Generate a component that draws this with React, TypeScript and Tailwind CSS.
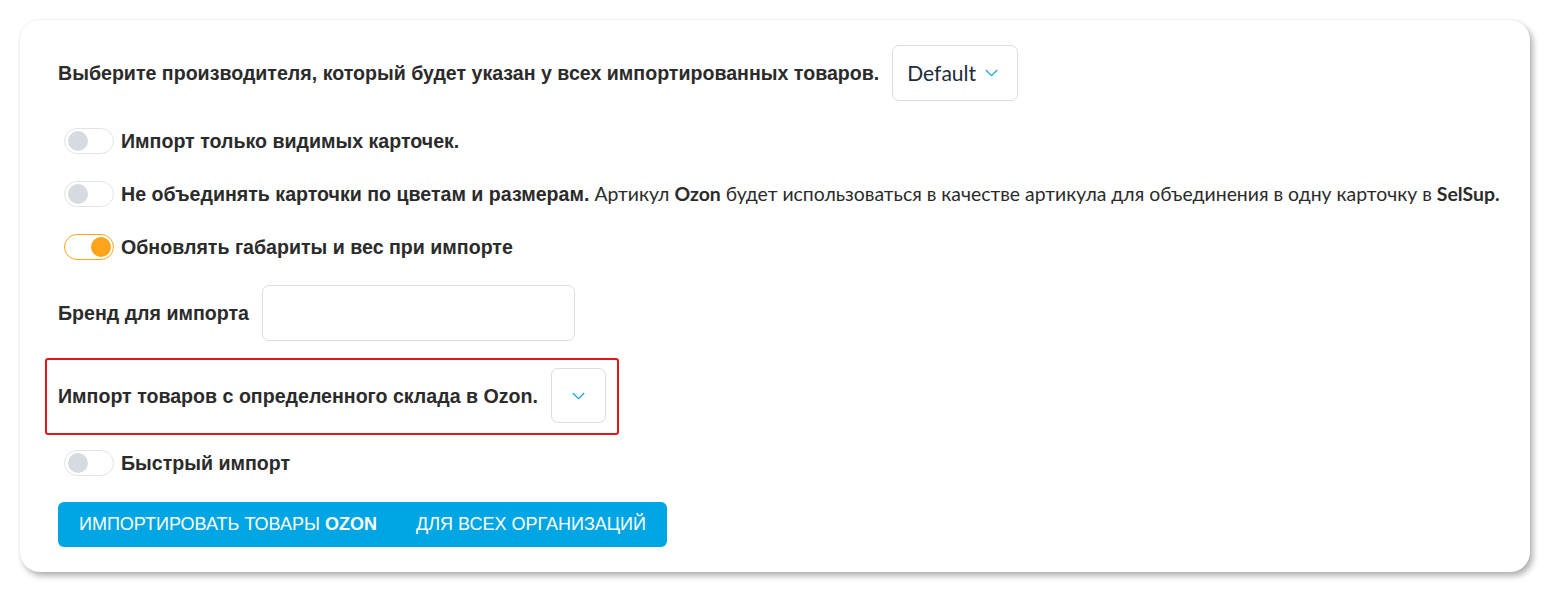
import { useState } from "react";

function Chevron() {
  return (
    <svg width="13" height="8" viewBox="0 0 13 8" fill="none">
      <path d="M0.8 1l5.7 5.7L12.2 1" stroke="#1aa6e0" strokeWidth="1.3" />
    </svg>
  );
}

function Toggle({ on, onChange }: { on: boolean; onChange: () => void }) {
  return (
    <button
      onClick={onChange}
      className={`relative w-[50px] h-[26px] shrink-0 rounded-full border bg-white ${
        on ? "border-[#ffa31a]" : "border-[#dfe3e7]"
      }`}
    >
      <span
        className={`absolute top-[2px] w-[20px] h-[20px] rounded-full ${
          on ? "left-[26px] bg-[#ffa31a]" : "left-[3px] bg-[#d5dbe0]"
        }`}
      />
    </button>
  );
}

const label = "font-['Liberation_Sans',Arial,sans-serif] text-[19.6px] font-bold leading-[26px]";

export default function App() {
  const [visibleOnly, setVisibleOnly] = useState(false);
  const [noMerge, setNoMerge] = useState(false);
  const [updateDims, setUpdateDims] = useState(true);
  const [fast, setFast] = useState(false);
  const [brand, setBrand] = useState("");

  return (
    <div className="min-h-screen bg-white pt-[20px] pl-[20px] font-['Lato',sans-serif] text-[#2b2b2b]">
      <div className="w-[1510px] rounded-[20px] bg-white pt-[25px] pb-[25px] px-[38px] shadow-[3px_4px_6px_rgba(0,0,0,0.3),0_0_3px_rgba(0,0,0,0.08)]">
        {/* Manufacturer */}
        <div className="flex items-center gap-[13px]">
          <span className={label}>
            Выберите производителя, который будет указан у всех импортированных товаров.
          </span>
          <button className="flex items-center gap-[9px] h-[56px] w-[126px] pl-[14px] rounded-[7px] border border-[#d8dde2] text-[21px] text-[#1c2a39]">
            Default
            <Chevron />
          </button>
        </div>

        {/* Toggles */}
        <div className="mt-[27px] flex flex-col gap-[27px] pl-[6px]">
          <label className="flex items-center gap-[7px]">
            <Toggle on={visibleOnly} onChange={() => setVisibleOnly(!visibleOnly)} />
            <span className={label}>Импорт только видимых карточек.</span>
          </label>
          <label className="flex items-center gap-[7px]">
            <Toggle on={noMerge} onChange={() => setNoMerge(!noMerge)} />
            <span className="text-[19.4px] leading-[26px] whitespace-nowrap">
              <b className={label}>Не объединять карточки по цветам и размерам.</b> Артикул{" "}
              <b>Ozon</b> будет использоваться в качестве артикула для объединения в одну
              карточку в <b>SelSup.</b>
            </span>
          </label>
          <label className="flex items-center gap-[7px]">
            <Toggle on={updateDims} onChange={() => setUpdateDims(!updateDims)} />
            <span className={label}>Обновлять габариты и вес при импорте</span>
          </label>
        </div>

        {/* Brand */}
        <div className="mt-[25px] flex items-center gap-[13px]">
          <span className={label}>Бренд для импорта</span>
          <input
            value={brand}
            onChange={(e) => setBrand(e.target.value)}
            className="h-[56px] w-[313px] rounded-[7px] border border-[#d8dde2] px-3 text-[18px] outline-none"
          />
        </div>

        {/* Warehouse */}
        <div className="mt-[17px] -ml-[13px] w-fit flex items-center gap-[13px] border-2 border-[#e8141c] rounded-[3px] pl-[11px] pr-[11px] pt-[8px] pb-[10px]">
          <span className={label}>Импорт товаров с определенного склада в Ozon.</span>
          <button className="flex items-center justify-center h-[55px] w-[55px] rounded-[7px] border border-[#d8dde2]">
            <Chevron />
          </button>
        </div>

        {/* Fast import */}
        <label className="mt-[15px] pl-[6px] flex items-center gap-[7px]">
          <Toggle on={fast} onChange={() => setFast(!fast)} />
          <span className={label}>Быстрый импорт</span>
        </label>

        {/* Import button */}
        <button className="mt-[26px] flex items-center gap-[39px] h-[45px] w-[609px] pl-[21px] rounded-[6px] bg-[#00a6e4] text-white font-['Liberation_Sans',Arial,sans-serif] text-[18px] uppercase">
          <span>
            Импортировать товары <b>Ozon</b>
          </span>
          <span>Для всех организаций</span>
        </button>
      </div>
    </div>
  );
}
